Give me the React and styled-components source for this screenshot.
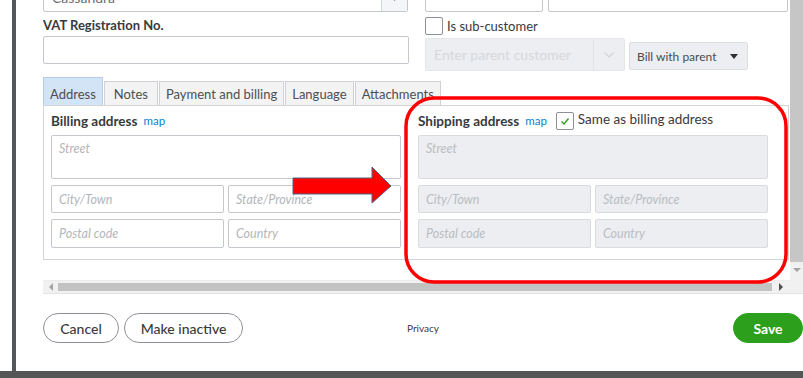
import React from "react";
import styled, { createGlobalStyle } from "styled-components";

const Global = createGlobalStyle`
  html, body { margin: 0; padding: 0; background: #fff; }
  body { font-family: Lato, "Open Sans", Arial, sans-serif; color: #393a3d; }
  * { box-sizing: border-box; }
`;

const Page = styled.div`
  position: relative;
  width: 803px;
  height: 378px;
  overflow: hidden;
  display: grid;
  grid-template-columns: 12px 4px 1fr;
  grid-template-rows: 371px 7px;
`;

const Gutter = styled.div`
  background: #fff;
`;

const Edge = styled.div`
  background: #555657;
`;

const BottomBand = styled.div`
  grid-column: 1 / -1;
  background: #555657;
`;

const Modal = styled.div`
  background: #fff;
  padding-left: 27px;
  display: flex;
  flex-direction: column;
  overflow: hidden;
`;

const ScrollFrame = styled.div`
  display: grid;
  grid-template-columns: 747px 13px;
  grid-template-rows: 280px 13px;
  border-bottom: 1px solid #e3e3e3;
`;

const Viewport = styled.div`
  overflow: hidden;
`;

const Inner = styled.div`
  margin-top: -18px;
`;

const VScroll = styled.div`
  display: flex;
  flex-direction: column;
  background: #f1f1f1;
`;

const VThumb = styled.div`
  flex: 1;
  background: #c6c6c6;
`;

const VTrackEnd = styled.div`
  height: 18px;
  display: flex;
  justify-content: center;
  padding-top: 6px;
`;

const HScroll = styled.div`
  display: flex;
  align-items: stretch;
  background: #f1f1f1;
  border-top: 1px solid #ececec;
`;

const ArrowCell = styled.div`
  width: ${(p) => p.$w}px;
  display: flex;
  align-items: center;
  justify-content: center;
`;

const HThumb = styled.div`
  flex: 1;
  margin: 2px 0;
  background: #c2c2c2;
`;

const Corner = styled.div`
  background: #f1f1f1;
`;

const Tri = styled.div`
  width: 0;
  height: 0;
  border-style: solid;
  ${(p) =>
    p.$dir === "down"
      ? `border-width: 4px 4px 0 4px; border-color: #a3a3a3 transparent transparent transparent;`
      : p.$dir === "left"
      ? `border-width: 4px 4px 4px 0; border-color: transparent #a3a3a3 transparent transparent;`
      : `border-width: 4px 0 4px 4px; border-color: transparent transparent transparent #505050;`}
`;

const TwoCol = styled.div`
  display: grid;
  grid-template-columns: 366px 363px;
  column-gap: 16px;
  width: 745px;
`;

const Combo = styled.div`
  height: ${(p) => p.$h || 30}px;
  width: ${(p) => (p.$w ? `${p.$w}px` : "auto")};
  display: flex;
  border: 1px solid ${(p) => (p.$disabled ? "#e3e5e8" : "#c4c7cc")};
  background: ${(p) => (p.$disabled ? "#eceef1" : "#fff")};
  border-radius: 2px;
`;

const ComboText = styled.div`
  flex: 1;
  display: flex;
  align-items: center;
  padding-left: ${(p) => p.$pad || 8}px;
  font-size: ${(p) => p.$size || 14}px;
  color: ${(p) => p.$color || "#6b6c72"};
  white-space: nowrap;
  overflow: hidden;
`;

const ComboButton = styled.div`
  width: ${(p) => p.$w || 26}px;
  display: flex;
  align-items: center;
  justify-content: center;
  border-left: 1px solid ${(p) => (p.$disabled ? "#e1e3e6" : "#d4d7dc")};
  background: ${(p) => (p.$disabled ? "transparent" : "#f4f5f8")};
  color: #6b6c72;
  font-size: 9px;
`;

const Field = styled.div`
  height: ${(p) => p.$h || 28}px;
  width: ${(p) => (p.$w ? `${p.$w}px` : "auto")};
  flex: ${(p) => (p.$w ? "none" : 1)};
  border: 1px solid ${(p) => (p.$disabled ? "#d9dbdf" : "#c4c7cc")};
  background: ${(p) => (p.$disabled ? "#eceef1" : "#fff")};
  border-radius: 2px;
  padding: ${(p) => (p.$top ? "5px 7px" : "0 7px")};
  display: flex;
  align-items: ${(p) => (p.$top ? "flex-start" : "center")};
  font-size: 12.5px;
  font-style: italic;
  color: ${(p) => (p.$disabled ? "#babdc2" : "#b3b6bb")};
`;

const FieldRow = styled.div`
  display: flex;
  gap: ${(p) => p.$gap || 5}px;
  align-items: ${(p) => p.$align || "stretch"};
  margin-top: ${(p) => p.$mt || 0}px;
`;

const Col = styled.div`
  display: flex;
  flex-direction: column;
`;

const Label = styled.div`
  font-size: 13px;
  font-weight: 700;
  color: #393a3d;
  height: 19px;
  line-height: 19px;
  margin-top: 4px;
  margin-bottom: 1px;
`;

const CheckRow = styled.label`
  display: flex;
  align-items: center;
  gap: 4px;
  font-size: 13px;
  color: #393a3d;
  height: 18px;
  margin-top: 5px;
`;

const Box = styled.span`
  width: 18px;
  height: 18px;
  border: 1px solid #8d9096;
  border-radius: 2px;
  background: #fff;
  display: inline-flex;
  align-items: center;
  justify-content: center;
  flex: none;
`;

const ParentRow = styled.div`
  display: flex;
  align-items: flex-end;
  gap: 4px;
  margin-top: 3px;
`;

const SelectBox = styled.div`
  width: 119px;
  height: 28px;
  margin-bottom: 1px;
  border: 1px solid #dcdee2;
  background: #eceef1;
  border-radius: 2px;
  display: flex;
  align-items: center;
  justify-content: space-between;
  padding: 0 9px 0 7px;
  font-size: 12px;
  color: #4a4b50;
`;

const Caret = styled.span`
  width: 0;
  height: 0;
  border-style: solid;
  border-width: 5px 4px 0 4px;
  border-color: #2d2e31 transparent transparent transparent;
`;

const Tabs = styled.div`
  display: flex;
  align-items: flex-end;
  gap: 1px;
  margin-top: 6px;
  height: 28px;
`;

const Tab = styled.div`
  height: ${(p) => (p.$active ? 28 : 24)}px;
  padding: 0 ${(p) => p.$pad || 6}px;
  display: flex;
  align-items: center;
  padding-top: ${(p) => (p.$active ? 4 : 0)}px;
  font-size: 13px;
  color: #4d4e52;
  border: 1px solid ${(p) => (p.$active ? "#b5cde6" : "#cfd1d4")};
  border-bottom: none;
  background: ${(p) => (p.$active ? "#d3e4f6" : "#f3f3f3")};
  white-space: nowrap;
`;

const Panel = styled.div`
  width: 746px;
  border: 1px solid #d2d4d8;
  padding: 5px 0 11px 7px;
  display: grid;
  grid-template-columns: 350px 350px;
  column-gap: 17px;
`;

const SectionHead = styled.div`
  height: 19px;
  display: flex;
  align-items: center;
  gap: 6px;
  font-size: 13.5px;
  font-weight: 700;
  color: #393a3d;
`;

const MapLink = styled.span`
  font-size: 11.5px;
  font-weight: 400;
  color: #0a7fd0;
  margin-right: 3px;
`;

const SameLabel = styled.span`
  font-weight: 400;
  font-size: 13.5px;
  margin-left: -2px;
  margin-top: -4px;
`;

const AddressGrid = styled.div`
  display: grid;
  grid-template-columns: 1fr 1fr;
  gap: 6px 4px;
  margin-top: 5px;
`;

const Wide = styled.div`
  grid-column: 1 / -1;
`;

const Footer = styled.div`
  margin-top: 19px;
  display: grid;
  grid-template-columns: 1fr auto 1fr;
  align-items: center;
`;

const BtnGroup = styled.div`
  display: flex;
  gap: 5px;
  justify-content: ${(p) => (p.$end ? "flex-end" : "flex-start")};
`;

const Pill = styled.button`
  height: 30px;
  width: ${(p) => p.$w}px;
  border-radius: 16px;
  border: 1px solid ${(p) => (p.$primary ? "#2ca01c" : "#8d9096")};
  background: ${(p) => (p.$primary ? "#2ca01c" : "#fff")};
  color: ${(p) => (p.$primary ? "#fff" : "#393a3d")};
  font-family: Lato, "Open Sans", Arial, sans-serif;
  font-size: 14px;
  font-weight: ${(p) => (p.$primary ? 700 : 500)};
  padding: 0;
`;

const Privacy = styled.span`
  font-size: 10px;
  color: #393a3d;
`;

const Overlay = styled.svg`
  position: absolute;
  left: 0;
  top: 0;
  pointer-events: none;
`;

const Check = () => (
  <svg width="12" height="12" viewBox="0 0 12 12">
    <path d="M2.5 6.5 L5 9 L9.5 3.5" fill="none" stroke="#2ca01c" strokeWidth="1.4" />
  </svg>
);

const Chevron = () => (
  <svg width="12" height="8" viewBox="0 0 12 8">
    <path d="M1.5 1.5 L6 6 L10.5 1.5" fill="none" stroke="#d0d3d7" strokeWidth="1.2" />
  </svg>
);

const AddressFields = ({ disabled }) => (
  <AddressGrid>
    <Wide>
      <Field $h={44} $top $disabled={disabled}>Street</Field>
    </Wide>
    <Field $disabled={disabled}>City/Town</Field>
    <Field $disabled={disabled}>State/Province</Field>
    <Field $h={29} $disabled={disabled}>Postal code</Field>
    <Field $h={29} $disabled={disabled}>Country</Field>
  </AddressGrid>
);

export default function App() {
  return (
    <>
      <Global />
      <Page>
        <Gutter />
        <Edge />
        <Modal>
          <ScrollFrame>
            <Viewport>
              <Inner>
                <TwoCol>
                  <Combo $w={365}>
                    <ComboText>Cassandra</ComboText>
                    <ComboButton>▼</ComboButton>
                  </Combo>
                  <FieldRow>
                    <Field $w={118} $h={30} />
                    <Field $h={30} />
                  </FieldRow>
                  <Col>
                    <Label>VAT Registration No.</Label>
                    <Field $w={366} />
                  </Col>
                  <Col>
                    <CheckRow>
                      <Box />
                      Is sub-customer
                    </CheckRow>
                    <ParentRow>
                      <Combo $w={200} $h={33} $disabled>
                        <ComboText $color="#d6d8dc" $size={14}>
                          Enter parent customer
                        </ComboText>
                        <ComboButton $w={31} $disabled>
                          <Chevron />
                        </ComboButton>
                      </Combo>
                      <SelectBox>
                        Bill with parent
                        <Caret />
                      </SelectBox>
                    </ParentRow>
                  </Col>
                </TwoCol>
                <Tabs>
                  <Tab $active>Address</Tab>
                  <Tab $pad={9}>Notes</Tab>
                  <Tab>Payment and billing</Tab>
                  <Tab>Language</Tab>
                  <Tab>Attachments</Tab>
                </Tabs>
                <Panel>
                  <Col>
                    <SectionHead>
                      Billing address <MapLink>map</MapLink>
                    </SectionHead>
                    <AddressFields />
                  </Col>
                  <Col>
                    <SectionHead>
                      Shipping address <MapLink>map</MapLink>
                      <Box>
                        <Check />
                      </Box>
                      <SameLabel>Same as billing address</SameLabel>
                    </SectionHead>
                    <AddressFields disabled />
                  </Col>
                </Panel>
              </Inner>
            </Viewport>
            <VScroll>
              <VThumb />
              <VTrackEnd>
                <Tri $dir="down" />
              </VTrackEnd>
            </VScroll>
            <HScroll>
              <ArrowCell $w={15}>
                <Tri $dir="left" />
              </ArrowCell>
              <HThumb />
              <ArrowCell $w={18}>
                <Tri $dir="right" />
              </ArrowCell>
            </HScroll>
            <Corner />
          </ScrollFrame>
          <Footer>
            <BtnGroup>
              <Pill $w={76}>Cancel</Pill>
              <Pill $w={119}>Make inactive</Pill>
            </BtnGroup>
            <Privacy>Privacy</Privacy>
            <BtnGroup $end>
              <Pill $primary $w={70}>Save</Pill>
            </BtnGroup>
          </Footer>
        </Modal>
        <BottomBand />
        <Overlay width="803" height="378" viewBox="0 0 803 378">
          <rect x="406" y="98" width="380" height="184" rx="28" ry="28" fill="none" stroke="#ff0000" strokeWidth="3.5" />
          <polygon
            points="293,178 372,178 372,167 391,186 372,203 372,194 293,194"
            fill="#ff0000"
            stroke="#4b6584"
            strokeWidth="1"
          />
        </Overlay>
      </Page>
    </>
  );
}
